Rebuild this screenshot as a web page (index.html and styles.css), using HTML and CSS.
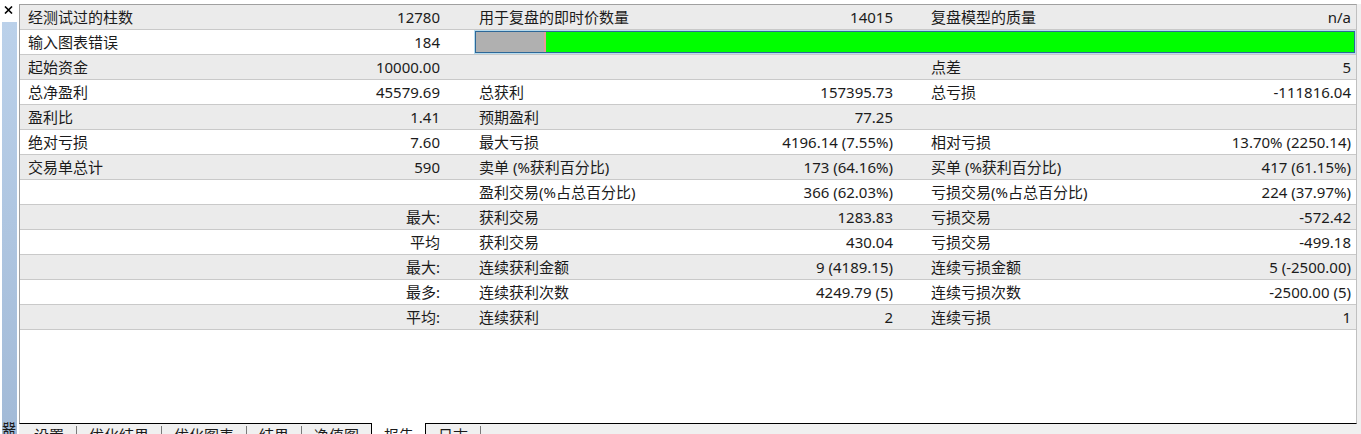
FILE: index.html
```html
<!DOCTYPE html>
<html lang="zh-CN">
<head>
<meta charset="utf-8">
<title>测试器 - 报告</title>
<link rel="stylesheet" href="styles.css">
</head>
<body>
<div class="window">
  <div class="side">
    <div class="close">
      <svg width="9" height="8" viewBox="0 0 9 8"><path d="M1 0.5 L8 7.5 M8 0.5 L1 7.5" stroke="#000" stroke-width="1.6" fill="none"/></svg>
    </div>
    <div class="strip"><span class="caption">测试器</span></div>
  </div>
  <div class="main">
    <div class="panel">
      <div class="report">
        <div class="row alt"><div class="l">经测试过的柱数</div><div class="v v1">12780</div><div class="l">用于复盘的即时价数量</div><div class="v v2">14015</div><div class="l">复盘模型的质量</div><div class="v v3">n/a</div></div>
        <div class="row"><div class="l">输入图表错误</div><div class="v v1">184</div>
          <div class="barcell"><div class="bar"><div class="bar-gray"></div><div class="bar-red"></div><div class="bar-green"></div></div></div>
        </div>
        <div class="row alt"><div class="l">起始资金</div><div class="v v1">10000.00</div><div class="l"></div><div class="v v2"></div><div class="l">点差</div><div class="v v3">5</div></div>
        <div class="row"><div class="l">总净盈利</div><div class="v v1">45579.69</div><div class="l">总获利</div><div class="v v2">157395.73</div><div class="l">总亏损</div><div class="v v3">-111816.04</div></div>
        <div class="row alt"><div class="l">盈利比</div><div class="v v1">1.41</div><div class="l">预期盈利</div><div class="v v2">77.25</div><div class="l"></div><div class="v v3"></div></div>
        <div class="row"><div class="l">绝对亏损</div><div class="v v1">7.60</div><div class="l">最大亏损</div><div class="v v2">4196.14 (7.55%)</div><div class="l">相对亏损</div><div class="v v3">13.70% (2250.14)</div></div>
        <div class="row alt"><div class="l">交易单总计</div><div class="v v1">590</div><div class="l">卖单 (%获利百分比)</div><div class="v v2">173 (64.16%)</div><div class="l">买单 (%获利百分比)</div><div class="v v3">417 (61.15%)</div></div>
        <div class="row"><div class="l"></div><div class="v v1"></div><div class="l">盈利交易(%占总百分比)</div><div class="v v2">366 (62.03%)</div><div class="l">亏损交易(%占总百分比)</div><div class="v v3">224 (37.97%)</div></div>
        <div class="row alt"><div class="l"></div><div class="v v1">最大:</div><div class="l">获利交易</div><div class="v v2">1283.83</div><div class="l">亏损交易</div><div class="v v3">-572.42</div></div>
        <div class="row"><div class="l"></div><div class="v v1">平均</div><div class="l">获利交易</div><div class="v v2">430.04</div><div class="l">亏损交易</div><div class="v v3">-499.18</div></div>
        <div class="row alt"><div class="l"></div><div class="v v1">最大:</div><div class="l">连续获利金额</div><div class="v v2">9 (4189.15)</div><div class="l">连续亏损金额</div><div class="v v3">5 (-2500.00)</div></div>
        <div class="row"><div class="l"></div><div class="v v1">最多:</div><div class="l">连续获利次数</div><div class="v v2">4249.79 (5)</div><div class="l">连续亏损次数</div><div class="v v3">-2500.00 (5)</div></div>
        <div class="row alt"><div class="l"></div><div class="v v1">平均:</div><div class="l">连续获利</div><div class="v v2">2</div><div class="l">连续亏损</div><div class="v v3">1</div></div>
      </div>
    </div>
    <div class="tabs">
      <div class="tab first sep">设置</div>
      <div class="tab sep">优化结果</div>
      <div class="tab sep">优化图表</div>
      <div class="tab sep">结果</div>
      <div class="tab">净值图</div>
      <div class="tab active">报告</div>
      <div class="tab sep">日志</div>
    </div>
  </div>
  <div class="gutter"></div>
</div>
</body>
</html>
```

FILE: styles.css
```css
html, body {
  margin: 0;
  padding: 0;
  background: #ffffff;
  overflow: hidden;
}
body {
  font-family: "Noto Sans", "Noto Sans CJK SC", sans-serif;
  font-size: 15px;
  color: #1b1b1b;
}
.window {
  display: flex;
  width: 1361px;
  height: 434px;
  overflow: hidden;
}
.side {
  width: 19px;
  flex: none;
  display: flex;
  flex-direction: column;
}
.close {
  height: 22px;
  flex: none;
  display: flex;
  justify-content: flex-start;
  padding-left: 4px;
  padding-top: 6px;
  box-sizing: border-box;
}
.strip {
  flex: 1;
  margin-left: 2px;
  width: 15px;
  background: linear-gradient(to bottom, #bbd1ea, #a2bad7);
  display: flex;
  flex-direction: column;
  justify-content: flex-end;
  align-items: center;
  overflow: hidden;
}
.caption {
  writing-mode: vertical-rl;
  transform: rotate(180deg);
  font-size: 14px;
  line-height: 15px;
  color: #1a1a1a;
  margin-bottom: -30px;
}
.main {
  width: 1338px;
  flex: none;
  margin-top: 4px;
  display: flex;
  flex-direction: column;
}
.panel {
  flex: none;
  height: 418px;
  border-top: 1px solid #a0a0a0;
  border-left: 1px solid #a0a0a0;
  border-right: 1px solid #c0c0c0;
  border-bottom: 1px solid #000000;
  background: #ffffff;
}
.row {
  display: grid;
  grid-template-columns: 220px 231px 229px 223px 227px 206px;
  height: 24px;
  line-height: 24px;
  border-bottom: 1px solid #c9c9c9;
  white-space: nowrap;
}
.row.alt {
  background: #ebebeb;
}
.l {
  padding-left: 8px;
}
.v {
  text-align: right;
}
.v1 { padding-right: 31px; }
.v2 { padding-right: 30px; }
.v3 { padding-right: 5px; }
.barcell {
  grid-column: 3 / 7;
  padding-left: 3px;
  display: flex;
}
.bar {
  flex: 1;
  display: flex;
  border: 1px solid #2d6797;
  outline: 1px solid #b6dcef;
  outline-offset: 0;
  margin: 1px;
  height: 20px;
}
.bar-gray {
  width: 68px;
  background: #b0b0b0;
}
.bar-red {
  width: 2px;
  background: #e59b9b;
}
.bar-green {
  flex: 1;
  background: #00ff00;
}
.tabs {
  flex: none;
  display: flex;
  background: #f0f0f0;
  height: 24px;
  line-height: 22px;
  white-space: nowrap;
}
.tab {
  padding: 0 12px;
  position: relative;
  color: #1b1b1b;
}
.tab.first {
  padding-left: 15px;
  padding-right: 12px;
}
.tab.sep {
  border-right: 1px solid transparent;
}
.tab.sep::after {
  content: "";
  position: absolute;
  right: -1px;
  top: 2px;
  bottom: 0;
  width: 1px;
  background: #7a7a7a;
}
.tab.active {
  background: #ffffff;
  border-left: 1px solid #000000;
  border-right: 1px solid #000000;
  margin-top: -1px;
  padding-top: 1px;
  padding-left: 12px;
  padding-right: 11px;
}
.gutter {
  flex: 1;
  margin-top: 4px;
  background: #f0f0f0;
}
```
